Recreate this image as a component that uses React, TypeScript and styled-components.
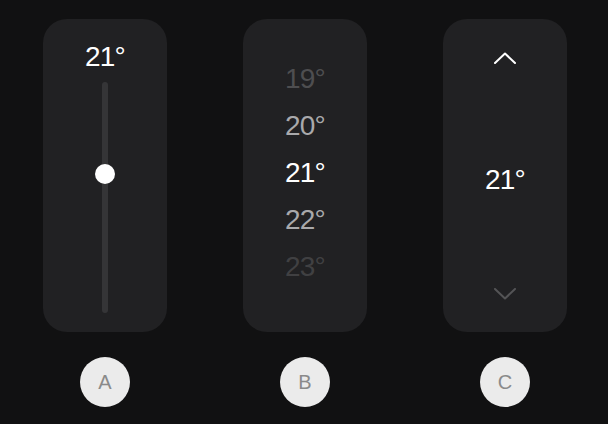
import React from 'react';
import styled, { createGlobalStyle } from 'styled-components';

const GlobalStyle = createGlobalStyle`
  html, body {
    margin: 0;
    padding: 0;
    background: #111112;
  }
  body {
    font-family: "Liberation Sans", Arial, sans-serif;
    -webkit-font-smoothing: antialiased;
  }
`;

const Page = styled.div`
  display: flex;
  gap: 76px;
  padding: 19px 0 0 43px;
  width: 608px;
  height: 424px;
  box-sizing: border-box;
`;

const Column = styled.div`
  display: flex;
  flex-direction: column;
  align-items: center;
  gap: 25px;
`;

const Card = styled.div`
  width: 124px;
  height: 313px;
  box-sizing: border-box;
  background: #212123;
  border-radius: 24px;
  display: flex;
  flex-direction: column;
  align-items: center;
`;

const SliderCard = styled(Card)`
  padding: 24px 0 19px;
`;

const PickerCard = styled(Card)`
  padding-top: 36px;
`;

const StepperCard = styled(Card)`
  padding: 33px 0 32px;
`;

const Temp = styled.div`
  font-size: 28px;
  line-height: 28px;
  color: #ffffff;
  letter-spacing: -0.8px;
`;

const Track = styled.div`
  position: relative;
  margin-top: 11px;
  flex: 1;
  width: 6px;
  border-radius: 3px;
  background: #353537;
`;

const Knob = styled.div<{ $pos: number }>`
  position: absolute;
  left: 50%;
  top: ${p => p.$pos}%;
  width: 20px;
  height: 20px;
  margin: -10px 0 0 -10px;
  border-radius: 50%;
  background: #ffffff;
`;

const Row = styled.div<{ $color: string }>`
  height: 47px;
  line-height: 47px;
  font-size: 28px;
  letter-spacing: -0.8px;
  color: ${p => p.$color};
`;

const StepBtn = styled.div<{ $color: string }>`
  display: flex;
  color: ${p => p.$color};
`;

const StepValue = styled.div`
  flex: 1;
  display: flex;
  align-items: center;
  justify-content: center;
  padding-top: 7px;
`;

const Badge = styled.div`
  width: 50px;
  height: 50px;
  border-radius: 50%;
  background: #ebebeb;
  color: #8a8a8a;
  font-size: 20px;
  display: flex;
  align-items: center;
  justify-content: center;
`;

const Chevron = ({ up }: { up?: boolean }) => (
  <svg width="24" height="12" viewBox="0 0 24 12" fill="none">
    <polyline
      points={up ? '2,11 12,1.5 22,11' : '2,1 12,10.5 22,1'}
      stroke="currentColor"
      strokeWidth="2"
      strokeLinecap="round"
      strokeLinejoin="round"
    />
  </svg>
);

const rows = [
  { t: '19°', c: '#4e4e50' },
  { t: '20°', c: '#a9a9ab' },
  { t: '21°', c: '#ffffff' },
  { t: '22°', c: '#a9a9ab' },
  { t: '23°', c: '#404042' },
];

export default function App() {
  return (
    <>
      <GlobalStyle />
      <Page>
        <Column>
          <SliderCard>
            <Temp>21°</Temp>
            <Track>
              <Knob $pos={40} />
            </Track>
          </SliderCard>
          <Badge>A</Badge>
        </Column>
        <Column>
          <PickerCard>
            {rows.map(r => (
              <Row key={r.t} $color={r.c}>{r.t}</Row>
            ))}
          </PickerCard>
          <Badge>B</Badge>
        </Column>
        <Column>
          <StepperCard>
            <StepBtn $color="#ffffff"><Chevron up /></StepBtn>
            <StepValue><Temp>21°</Temp></StepValue>
            <StepBtn $color="#545456"><Chevron /></StepBtn>
          </StepperCard>
          <Badge>C</Badge>
        </Column>
      </Page>
    </>
  );
}
